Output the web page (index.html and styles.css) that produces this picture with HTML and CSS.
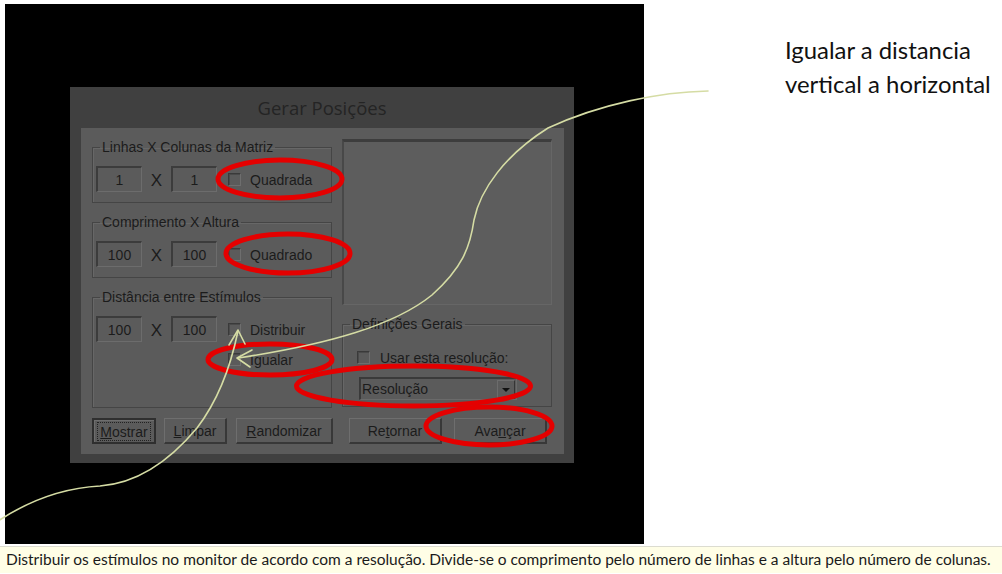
FILE: index.html
```html
<!DOCTYPE html>
<html lang="pt">
<head>
<meta charset="utf-8">
<title>Gerar Posições</title>
<link rel="stylesheet" href="styles.css">
</head>
<body>
<div class="page">
  <div class="top">
    <div class="shot">
      <div class="dialog">
        <div class="title">Gerar Posições</div>
        <div class="panel">
          <div class="main">
            <div class="left">
              <fieldset class="group g1">
                <legend>Linhas X Colunas da Matriz</legend>
                <div class="row">
                  <span class="field">1</span><span class="x">X</span><span class="field">1</span>
                  <span class="check"></span><span class="label">Quadrada</span>
                </div>
              </fieldset>
              <fieldset class="group g2">
                <legend>Comprimento X Altura</legend>
                <div class="row">
                  <span class="field">100</span><span class="x">X</span><span class="field">100</span>
                  <span class="check"></span><span class="label">Quadrado</span>
                </div>
              </fieldset>
              <fieldset class="group g3">
                <legend>Distância entre Estímulos</legend>
                <div class="row">
                  <span class="field">100</span><span class="x">X</span><span class="field">100</span>
                  <span class="check"></span><span class="label">Distribuir</span>
                </div>
                <div class="row sub">
                  <span class="check"></span><span class="label">Igualar</span>
                </div>
              </fieldset>
            </div>
            <div class="right">
              <div class="preview"></div>
              <fieldset class="group defs">
                <legend>Definições Gerais</legend>
                <div class="row use">
                  <span class="check"></span><span class="label">Usar esta resolução:</span>
                </div>
                <div class="select">
                  <span class="sel-text">Resolução</span>
                  <span class="sel-btn"><span class="tri"></span></span>
                </div>
              </fieldset>
            </div>
          </div>
          <div class="buttons">
            <span class="btn b-mostrar"><span class="focus"><u>M</u>ostrar</span></span>
            <span class="btn b-limpar"><u>L</u>impar</span>
            <span class="btn b-rand"><u>R</u>andomizar</span>
            <span class="btn b-ret">Re<u>t</u>ornar</span>
            <span class="btn b-av">Ava<u>n</u>çar</span>
          </div>
        </div>
      </div>
    </div>
    <div class="note">Igualar a distancia<br>vertical a horizontal</div>
  </div>
  <div class="caption">Distribuir os estímulos no monitor de acordo com a resolução. Divide-se o comprimento pelo número de linhas e a altura pelo número de colunas.</div>

  <svg class="overlay" width="1002" height="574" viewBox="0 0 1002 574">
    <g fill="none" stroke="#e40000" stroke-width="5">
      <ellipse cx="280" cy="179" rx="62" ry="19"/>
      <ellipse cx="288" cy="253.5" rx="62" ry="19.5"/>
      <ellipse cx="270" cy="359.5" rx="62" ry="15.5"/>
      <ellipse cx="413.5" cy="386" rx="117" ry="20"/>
      <ellipse cx="489" cy="426" rx="63" ry="19"/>
    </g>
    <g fill="none" stroke="#d5dca4" stroke-width="1.6" stroke-linecap="round" stroke-linejoin="round">
      <path d="M708,91 C660,92 600,104 548,128 C505,155 480,190 474,220 C470,248 462,268 432,295 C395,325 330,344 238,358"/>
      <path d="M252,350 L237,358 L250,367"/>
      <path d="M-2,521 C30,500 62,488 100,486 C140,483 172,458 197,428 C220,398 232,360 238,331"/>
      <path d="M229,345 L238,330 L245,344"/>
    </g>
  </svg>
</div>
</body>
</html>
```

FILE: styles.css
```css
html, body {
  margin: 0;
  padding: 0;
  background: #ffffff;
}

.page {
  position: relative;
  width: 1002px;
  height: 574px;
  overflow: hidden;
  font-family: "Liberation Sans", Arial, sans-serif;
}

.top {
  display: flex;
  height: 544px;
}

.shot {
  margin: 4px 0 0 5px;
  width: 639px;
  height: 540px;
  background: #000000;
  display: flex;
  flex-direction: column;
  align-items: flex-start;
  flex: none;
}

.dialog {
  margin: 83px 0 0 65px;
  width: 504px;
  height: 376px;
  background: #404040;
  display: flex;
  flex-direction: column;
}

.title {
  height: 41px;
  line-height: 41px;
  text-align: center;
  font-family: "Open Sans", "Noto Sans", sans-serif;
  font-size: 18.5px;
  color: #242424;
}

.panel {
  margin: 0 10px 9px 11px;
  height: 326px;
  box-sizing: border-box;
  background: #5b5b5b;
  padding: 12px 12px 10px 11px;
  display: flex;
  flex-direction: column;
  color: #1b1b1b;
  font-size: 14px;
}

.main {
  display: flex;
  gap: 10px;
}

.left {
  width: 240px;
  display: flex;
  flex-direction: column;
}

.right {
  width: 210px;
  display: flex;
  flex-direction: column;
}

.group {
  margin: 0;
  border: 1px solid #454545;
  box-shadow: inset 1px 1px 0 #676767;
  padding: 12px 3px 10px 3px;
  min-width: 0;
}

.group legend {
  padding: 0 2px;
  margin-left: 4px;
  line-height: 14px;
  font-size: 14px;
  color: #1b1b1b;
}

.g2, .g3 {
  margin-top: 12px;
}

.g3 {
  padding-bottom: 41px;
}

.row {
  display: flex;
  align-items: center;
  height: 26px;
}

.row.sub {
  height: 14px;
  margin-top: 10px;
  padding-left: 132px;
}

.field {
  width: 46px;
  height: 26px;
  box-sizing: border-box;
  border-top: 2px solid #3c3c3c;
  border-left: 2px solid #3c3c3c;
  border-right: 1px solid #6c6c6c;
  border-bottom: 1px solid #6c6c6c;
  display: flex;
  align-items: center;
  justify-content: center;
  font-size: 14px;
}

.x {
  width: 29px;
  text-align: center;
  font-size: 17px;
  padding-top: 4px;
}

.check {
  width: 13px;
  height: 13px;
  box-sizing: border-box;
  border-top: 1px solid #3a3a3a;
  border-left: 1px solid #3a3a3a;
  border-right: 1px solid #6e6e6e;
  border-bottom: 1px solid #6e6e6e;
  box-shadow: inset 1px 1px 0 #4a4a4a;
  margin-left: 11px;
  flex: none;
}

.row.sub .check {
  margin-left: 0;
}

.label {
  margin-left: 9px;
  white-space: nowrap;
  padding-top: 2px;
}

.preview {
  margin-top: -1px;
  height: 166px;
  box-sizing: border-box;
  border-top: 3px solid #3d3d3d;
  border-left: 2px solid #484848;
  border-right: 1px solid #666666;
  border-bottom: 1px solid #666666;
  background: #5d5d5d;
}

.defs {
  margin-top: 12px;
  padding: 19px 4px 6px 14px;
}

.defs legend {
  margin-left: -7px;
}

.row.use {
  height: 14px;
}

.row.use .check {
  margin-left: 0;
}

.row.use .label {
  margin-left: 10px;
}

.select {
  margin: 13px 0 0 2px;
  width: 158px;
  height: 23px;
  box-sizing: border-box;
  border-top: 2px solid #3a3a3a;
  border-left: 2px solid #3a3a3a;
  border-right: 1px solid #6a6a6a;
  border-bottom: 1px solid #6a6a6a;
  display: flex;
  align-items: center;
}

.sel-text {
  flex: 1;
  padding-left: 1px;
}

.sel-btn {
  width: 18px;
  height: 19px;
  box-sizing: border-box;
  border-left: 1px solid #6c6c6c;
  border-top: 1px solid #6c6c6c;
  border-right: 1px solid #353535;
  border-bottom: 1px solid #353535;
  display: flex;
  align-items: center;
  justify-content: center;
  margin-right: 1px;
}

.tri {
  width: 0;
  height: 0;
  border-left: 4px solid transparent;
  border-right: 4px solid transparent;
  border-top: 4px solid #111111;
  margin-top: 2px;
}

.buttons {
  margin-top: 10px;
  display: flex;
  height: 26px;
}

.btn {
  height: 26px;
  box-sizing: border-box;
  border-top: 1px solid #6e6e6e;
  border-left: 1px solid #6e6e6e;
  border-right: 2px solid #383838;
  border-bottom: 2px solid #383838;
  display: flex;
  align-items: center;
  justify-content: center;
  font-size: 14px;
  color: #1b1b1b;
}

.b-mostrar {
  width: 64px;
  border: 2px solid #2f2f2f;
  box-shadow: inset 1px 1px 0 #6e6e6e;
}

.focus {
  border: 1px dotted #222222;
  padding: 1px 2px 0 2px;
  line-height: 16px;
}

.b-limpar {
  width: 63px;
  margin-left: 8px;
}

.b-rand {
  width: 97px;
  margin-left: 9px;
}

.b-ret {
  width: 93px;
  margin-left: 16px;
}

.b-av {
  width: 93px;
  margin-left: 12px;
}

.note {
  margin-left: 141px;
  padding-top: 33px;
  font-family: "Lato", "Open Sans", sans-serif;
  font-size: 23.9px;
  line-height: 34px;
  color: #111111;
  white-space: nowrap;
}

.caption {
  margin-top: 2px;
  border-top: 1px solid #dcdcd0;
  height: 27px;
  box-sizing: border-box;
  background: #fffee6;
  padding-left: 6px;
  font-family: "Lato", "Open Sans", sans-serif;
  font-size: 15.5px;
  line-height: 25px;
  color: #1a1a1a;
  white-space: nowrap;
}

.overlay {
  position: absolute;
  top: 0;
  left: 0;
  pointer-events: none;
}
```
